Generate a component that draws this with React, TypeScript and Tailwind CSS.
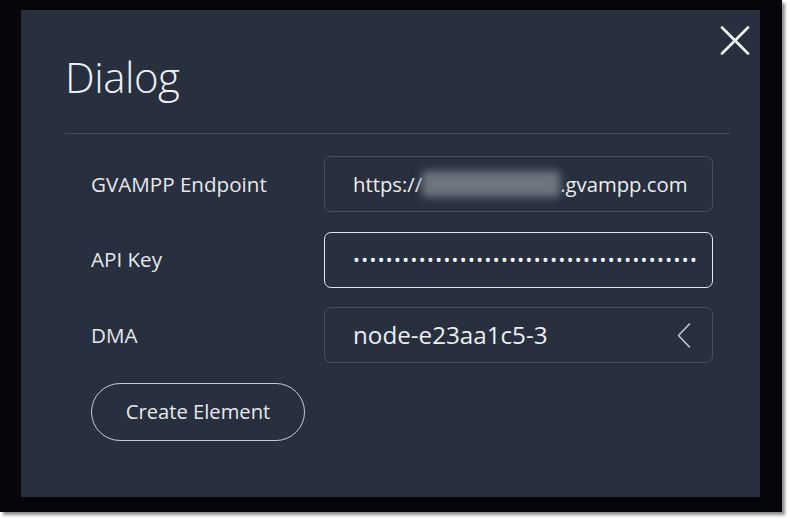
import React from 'react';

const font = { fontFamily: '"Open Sans", "Noto Sans", sans-serif' };

const CloseIcon: React.FC = () => (
  <svg width="30" height="29" viewBox="0 0 30 29" fill="none">
    <path d="M2 1.5 L28 27.5 M28 1.5 L2 27.5" stroke="#f2f3f5" strokeWidth="2.6" strokeLinecap="round" />
  </svg>
);

const ChevronLeft: React.FC = () => (
  <svg width="14" height="25" viewBox="0 0 14 25" fill="none">
    <path d="M12.5 1 L1.5 12.5 L12.5 24" stroke="#c4c8cf" strokeWidth="1.6" strokeLinecap="round" strokeLinejoin="round" />
  </svg>
);

interface RowProps {
  label: string;
  focused?: boolean;
  children: React.ReactNode;
}

const FormRow: React.FC<RowProps> = ({ label, focused, children }) => (
  <div className="flex items-center">
    <div className="w-[233px] text-[20.6px] text-[#e6e8eb]">{label}</div>
    <div
      className={`flex items-center w-[389px] h-[56px] rounded-[7px] border pl-[28px] ${
        focused ? 'border-[#e4e6ea] pr-[10px]' : 'border-[#474e5c] pr-[21px]'
      }`}
    >
      {children}
    </div>
  </div>
);

export default function App() {
  const dots = '•'.repeat(42);

  return (
    <div className="w-[790px] h-[522px] bg-white" style={font}>
      <div className="w-[782px] h-[512px] bg-[#05060a] pl-[21px] pt-[10px] shadow-[3px_3px_3px_rgba(0,0,0,0.45)]">
        <div className="relative w-[739px] h-[487px] bg-[#282f3e] pl-[44px] pr-[30px] pt-[46px]">
          <button className="absolute right-[10px] top-[16px]">
            <CloseIcon />
          </button>

          <h1 className="text-[42px] leading-[42px] font-light text-[#eef0f3] tracking-[-0.5px]">Dialog</h1>
          <div className="mt-[35px] h-px bg-[#3c4d5c]" />

          <div className="mt-[22px] pl-[26px] flex flex-col gap-[19.5px]">
            <FormRow label="GVAMPP Endpoint">
              <span className="text-[20.3px] text-[#eceef1] whitespace-nowrap flex items-center">
                https://
                <span className="inline-block w-[138px] h-[26px] bg-[#6f7682] blur-[4px] rounded-[4px]" />
                .gvampp.com
              </span>
            </FormRow>

            <FormRow label="API Key" focused>
              <span className="text-[18px] leading-none text-[#f4f5f7] tracking-[1.45px] whitespace-nowrap">
                {dots}
              </span>
            </FormRow>

            <FormRow label="DMA">
              <span className="flex-1 text-[24.2px] text-[#eceef1]">node-e23aa1c5-3</span>
              <ChevronLeft />
            </FormRow>

            <button className="w-[214px] h-[58px] rounded-full border border-[#c9ccd1] text-[20.2px] text-[#e6e8eb]">
              Create Element
            </button>
          </div>
        </div>
      </div>
    </div>
  );
}
